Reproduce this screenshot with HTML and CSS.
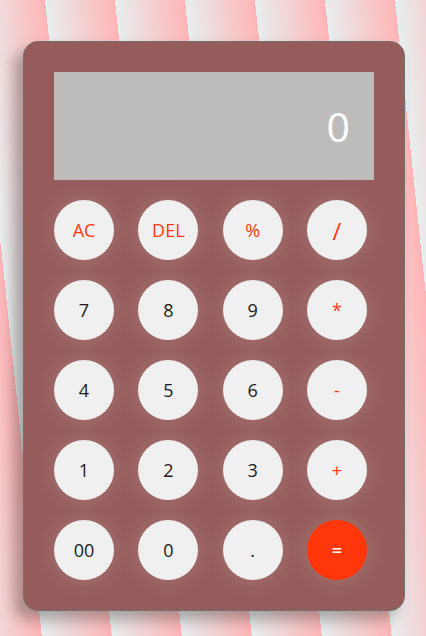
FILE: index.html
```html
<!DOCTYPE html>
<html lang="en">
<head>
<meta charset="utf-8">
<title>Calculator</title>
<link rel="stylesheet" href="styles.css">
</head>
<body>
<div class="calculator">
  <div class="display">0</div>
  <div class="keys">
    <button class="key op">AC</button>
    <button class="key op">DEL</button>
    <button class="key op">%</button>
    <button class="key op slash">/</button>
    <button class="key">7</button>
    <button class="key">8</button>
    <button class="key">9</button>
    <button class="key op">*</button>
    <button class="key">4</button>
    <button class="key">5</button>
    <button class="key">6</button>
    <button class="key op">-</button>
    <button class="key">1</button>
    <button class="key">2</button>
    <button class="key">3</button>
    <button class="key op">+</button>
    <button class="key">00</button>
    <button class="key">0</button>
    <button class="key">.</button>
    <button class="key equal">=</button>
  </div>
</div>
</body>
</html>
```
FILE: styles.css
```css
html {
  height: 100%;
  background: repeating-linear-gradient(84deg, #e8eeee 41.6px, #ffb4b6 111.2px);
}
body {
  margin: 0;
  height: 100%;
  font-family: "Open Sans", "Liberation Sans", sans-serif;
}
.calculator {
  box-sizing: border-box;
  width: 382px;
  margin: 41px 0 0 23px;
  padding: 30px;
  background: #955c5b;
  border: 1px solid #6f6f6f;
  border-radius: 15px;
  box-shadow: -9px 9px 14px rgba(40, 40, 40, 0.35);
}
.display {
  height: 108px;
  box-sizing: border-box;
  background: #bebcba;
  color: #ffffff;
  font-size: 41px;
  line-height: 108px;
  text-align: right;
  padding-right: 24px;
}
.keys {
  display: grid;
  grid-template-columns: repeat(4, 60px);
  column-gap: 24.33px;
  row-gap: 20px;
  margin-top: 20px;
}
.key {
  width: 60px;
  height: 60px;
  border: none;
  border-radius: 50%;
  background: #f0f0f0;
  color: #1c1c1c;
  font-family: inherit;
  font-size: 18px;
  padding: 0;
  box-shadow: 0 0 22px rgba(255, 255, 255, 0.18);
}
.op {
  color: #ff3a0e;
}
.slash {
  font-size: 24px;
}
.equal {
  background: #ff370b;
  color: #ffffff;
  font-weight: 600;
}
```
